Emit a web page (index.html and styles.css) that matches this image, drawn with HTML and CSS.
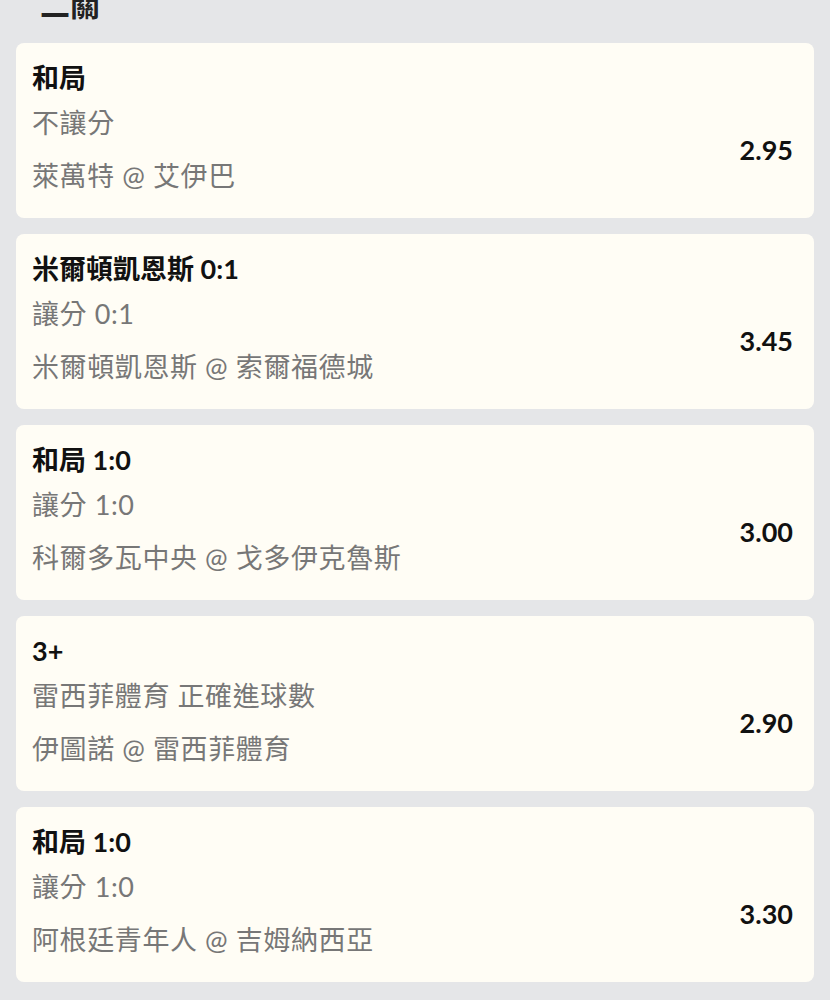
FILE: index.html
```html
<!DOCTYPE html>
<html lang="zh-Hant">
<head>
    <meta charset="UTF-8">
    <meta name="viewport" content="width=device-width, initial-scale=1.0">
    <title>二關</title>
    <link rel="stylesheet" href="styles.css">
</head>
<body>

<div class="section-title">二關</div>

<div class="bet-list">
    <div class="bet-card">
        <div class="bet-pick">和局</div>
        <div class="bet-body">
            <div class="bet-info">
                <div class="bet-line">不讓分</div>
                <div class="bet-line">萊萬特 @ 艾伊巴</div>
            </div>
            <div class="bet-odds">2.95</div>
        </div>
    </div>

    <div class="bet-card">
        <div class="bet-pick">米爾頓凱恩斯 0:1</div>
        <div class="bet-body">
            <div class="bet-info">
                <div class="bet-line">讓分 0:1</div>
                <div class="bet-line">米爾頓凱恩斯 @ 索爾福德城</div>
            </div>
            <div class="bet-odds">3.45</div>
        </div>
    </div>

    <div class="bet-card">
        <div class="bet-pick">和局 1:0</div>
        <div class="bet-body">
            <div class="bet-info">
                <div class="bet-line">讓分 1:0</div>
                <div class="bet-line">科爾多瓦中央 @ 戈多伊克魯斯</div>
            </div>
            <div class="bet-odds">3.00</div>
        </div>
    </div>

    <div class="bet-card">
        <div class="bet-pick">3+</div>
        <div class="bet-body">
            <div class="bet-info">
                <div class="bet-line">雷西菲體育 正確進球數</div>
                <div class="bet-line">伊圖諾 @ 雷西菲體育</div>
            </div>
            <div class="bet-odds">2.90</div>
        </div>
    </div>

    <div class="bet-card">
        <div class="bet-pick">和局 1:0</div>
        <div class="bet-body">
            <div class="bet-info">
                <div class="bet-line">讓分 1:0</div>
                <div class="bet-line">阿根廷青年人 @ 吉姆納西亞</div>
            </div>
            <div class="bet-odds">3.30</div>
        </div>
    </div>
</div>

</body>
</html>
```

FILE: styles.css
```css
body {
    font-family: "Lato", "Noto Sans CJK TC", sans-serif;
    margin: 0;
    padding: 0;
    background-color: #e5e6e8;
    color: #111;
}
.section-title {
    font-size: 30px;
    font-weight: bold;
    line-height: 36px;
    color: #222;
    margin-top: -14px;
    padding-left: 40px;
    height: 36px;
    overflow: hidden;
}
.bet-list {
    display: flex;
    flex-direction: column;
    gap: 16px;
    padding: 21px 16px 20px 16px;
}
.bet-card {
    background-color: #fffdf5;
    border-radius: 8px;
    padding: 20px 21px 22px 16px;
    height: 175px;
    box-sizing: border-box;
}
.bet-pick {
    font-size: 27px;
    font-weight: bold;
    line-height: 30px;
    color: #111;
}
.bet-body {
    display: flex;
    align-items: center;
    justify-content: space-between;
    margin-top: 10px;
}
.bet-info {
    display: flex;
    flex-direction: column;
    gap: 13px;
}
.bet-line {
    font-size: 27px;
    line-height: 40px;
    letter-spacing: 0.6px;
    color: #777;
}
.bet-odds {
    font-size: 27px;
    font-weight: bold;
    color: #111;
}
```
